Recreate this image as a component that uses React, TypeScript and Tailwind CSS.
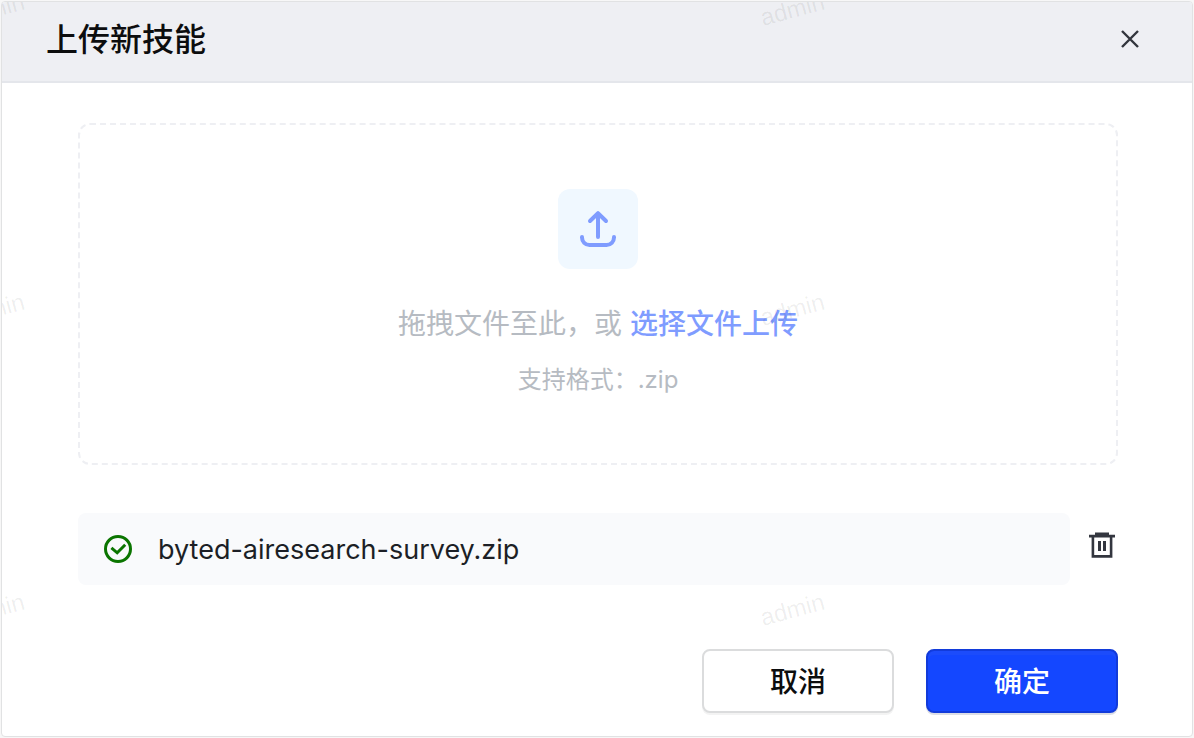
import React, { useRef, useState } from 'react';

const UploadIcon: React.FC = () => (
  <svg className="w-10 h-10" viewBox="0 0 40 40" fill="none" stroke="currentColor" strokeWidth="4" strokeLinecap="round" strokeLinejoin="round">
    <path d="M20 5v23M12 12l8-7.8 8 7.8" />
    <path d="M4 28v.5a7.5 7.5 0 0 0 7.5 7.5h17a7.5 7.5 0 0 0 7.5-7.5V28" />
  </svg>
);

const SuccessIcon: React.FC = () => (
  <svg className="w-7 h-7 shrink-0 text-[#0b7500]" viewBox="0 0 28 28" fill="none" stroke="currentColor">
    <circle cx="14" cy="14" r="12.5" strokeWidth="3" />
    <path d="M7.4 12.8l5.8 5 8-8" strokeWidth="3" />
  </svg>
);

const TrashIcon: React.FC = () => (
  <svg className="w-7 h-7" viewBox="0 0 28 28" fill="none">
    <path d="M7 1.4h14v2.4h6v2.6H1V3.8h6z" fill="currentColor" />
    <path d="M4.9 5v20.4h18.2V5" stroke="currentColor" strokeWidth="2.6" />
    <path d="M11.5 10v10M16.5 10v10" stroke="currentColor" strokeWidth="3" />
  </svg>
);

const CloseIcon: React.FC = () => (
  <svg className="w-5 h-5" viewBox="0 0 20 20" fill="none" stroke="currentColor" strokeWidth="2.4">
    <path d="M2 2l16 16M18 2L2 18" />
  </svg>
);

// Marca de agua: se repite cada 800px en horizontal y cada 300px en vertical
const Watermark: React.FC<{ text: string }> = ({ text }) => (
  <svg className="absolute inset-0 w-full h-full pointer-events-none" aria-hidden="true">
    {[0, 1, 2].map(row =>
      [0, 1].map(col => (
        <text
          key={`${row}-${col}`}
          transform={`translate(${col * 800 - 39} ${row * 300 + 24}) rotate(-15)`}
          className="fill-black/7 text-[24px] font-light font-['Liberation_Sans',sans-serif]"
        >
          {text}
        </text>
      ))
    )}
  </svg>
);

const App: React.FC = () => {
  const inputRef = useRef<HTMLInputElement>(null);
  const [archivo, setArchivo] = useState<string | null>('byted-airesearch-survey.zip');

  const handleFile = (files: FileList | null) => {
    if (files && files.length > 0) {
      setArchivo(files[0].name);
    }
  };

  return (
    <div lang="zh-CN" className="p-px bg-[#f7f7f7] font-[Inter,'Noto_Sans_CJK_SC',sans-serif]">
      <div role="dialog" aria-labelledby="titulo" className="relative overflow-hidden rounded-sm border border-[#e1e2e3] bg-white">
        {/* Header */}
        <div className="flex items-center justify-between h-[81px] pl-11 pr-[52px] pb-1 bg-[#eeeff3] border-b-2 border-[#e4e6eb]">
          <h1 id="titulo" className="text-[32px] leading-10 font-medium text-[#0c0d0e]">上传新技能</h1>
          <button type="button" aria-label="关闭" className="pb-0.5 text-[#32353c]">
            <CloseIcon />
          </button>
        </div>

        <div className="pl-[76px] pr-[74px] pt-10 pb-[23px]">
          {/* Zona de carga */}
          <div
            onDragOver={e => e.preventDefault()}
            onDrop={e => {
              e.preventDefault();
              handleFile(e.dataTransfer.files);
            }}
            className="flex flex-col items-center py-16 rounded-xl border-2 border-dashed border-[#eeeff3]"
          >
            <div className="flex items-center justify-center w-20 h-20 rounded-xl bg-[#f0f8ff] text-[#7f9cff]">
              <UploadIcon />
            </div>
            <p className="mt-8 pt-0.5 text-[28px] leading-[42px] text-[#b6bbc2]">
              {'拖拽文件至此\uFF0C或 '}
              <button type="button" onClick={() => inputRef.current?.click()} className="font-medium text-[#7f9cff]">
                选择文件上传
              </button>
            </p>
            <p className="mt-4 text-2xl leading-[38px] text-[#b6bbc2]">{'支持格式\uFF1A.zip'}</p>
            <input
              ref={inputRef}
              type="file"
              accept=".zip"
              aria-label="选择文件上传"
              className="hidden"
              onChange={e => handleFile(e.target.files)}
            />
          </div>

          {/* Archivo */}
          {archivo && (
            <div className="flex items-center mt-12">
              <div className="flex flex-1 items-center h-[72px] px-[26px] rounded-lg bg-[#f9fafc]">
                <SuccessIcon />
                <span className="ml-[26px] pt-0.5 text-[27px] leading-10 text-[#1c1f26]">{archivo}</span>
              </div>
              <button type="button" aria-label="删除" onClick={() => setArchivo(null)} className="ml-[18px] mr-0.5 pb-2 text-[#33363f]">
                <TrashIcon />
              </button>
            </div>
          )}

          {/* Acciones */}
          <div className="flex justify-end gap-8 mt-16">
            <button
              type="button"
              className="w-48 h-16 pt-0.5 rounded-lg border-2 border-[#dbdcdd] bg-white text-[28px] font-medium text-[#0c0d0e] shadow-[0_2px_0_#f3f3f3]"
            >
              取消
            </button>
            <button
              type="button"
              className="w-48 h-16 pt-0.5 rounded-lg border-2 border-[#123bda] bg-[#1447ff] text-[28px] font-medium text-white shadow-[0_2px_0_#dcdee6,inset_0_4px_0_#1c4cfb]"
            >
              确定
            </button>
          </div>
        </div>

        <Watermark text="admin" />
      </div>
    </div>
  );
};

export default App;
